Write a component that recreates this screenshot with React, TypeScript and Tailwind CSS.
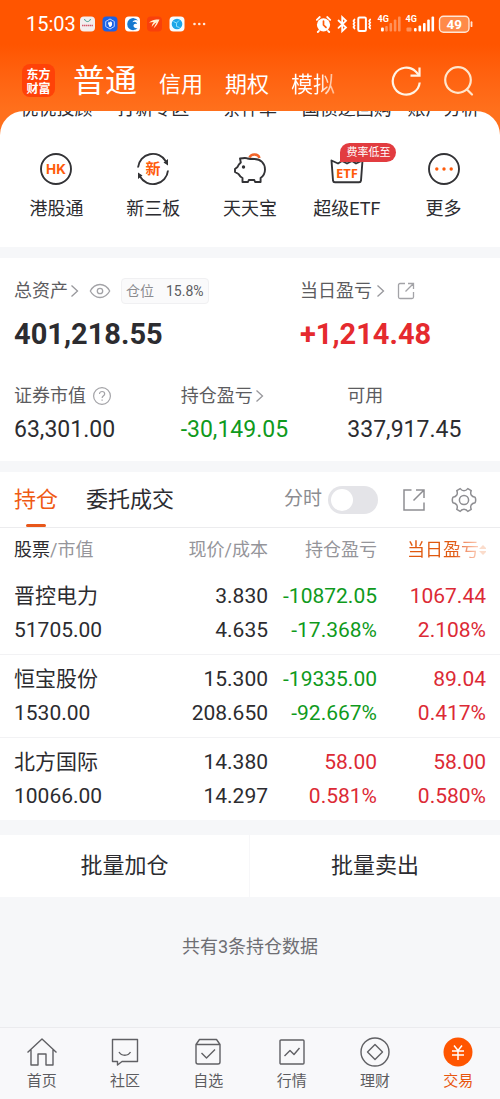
import React from 'react';

const RED = 'text-[#dc2a35]';
const GREEN = 'text-[#0f9a1c]';

const scrolledShortcuts = ['优优投顾', '打新专区', '条件单', '国债逆回购', '账户分析'];

type Cell = { top: string; bottom: string; tone: string };
type Holding = { name: string; value: string; price: string; cost: string; total: Cell; today: Cell };

const holdings: Holding[] = [
  {
    name: '晋控电力', value: '51705.00', price: '3.830', cost: '4.635',
    total: { top: '-10872.05', bottom: '-17.368%', tone: GREEN },
    today: { top: '1067.44', bottom: '2.108%', tone: RED },
  },
  {
    name: '恒宝股份', value: '1530.00', price: '15.300', cost: '208.650',
    total: { top: '-19335.00', bottom: '-92.667%', tone: GREEN },
    today: { top: '89.04', bottom: '0.417%', tone: RED },
  },
  {
    name: '北方国际', value: '10066.00', price: '14.380', cost: '14.297',
    total: { top: '58.00', bottom: '0.581%', tone: RED },
    today: { top: '58.00', bottom: '0.580%', tone: RED },
  },
];

function StatusApps() {
  return (
    <svg width="126" height="16" viewBox="0 0 126 16" aria-hidden="true">
      <rect x="0" y="0.5" width="15" height="15" rx="4" fill="#f3eeee" />
      <path d="M4.5 3c.8 3.4 5.2 3.4 6 0" fill="none" stroke="#3d9a8c" strokeWidth="1" />
      <path d="M2 9.5h11" stroke="#d25a6c" strokeWidth="1.6" strokeDasharray="1.4 .5" />
      <rect x="22.5" y="0.5" width="15" height="15" rx="4" fill="#1b62e6" />
      <path d="M30 3l4.3 2.5v5L30 13l-4.3-2.5v-5z" fill="none" stroke="#cfe0ff" strokeWidth=".9" />
      <path d="M28 7.5l.8-2 .9 1 .6-1.6.8 1.5.9-.8v3.6L30.5 11h-1z" fill="#fff" />
      <rect x="45" y="0.5" width="15" height="15" rx="4" fill="#fff" />
      <path d="M58 4.5A6 6 0 1 0 57.8 12c-2 .8-4.300-.4-4.300-2.300 0-1.700 1.700-2.500 3.500-1.700 0-2-2.500-3-4.600-1.800 1.200-2.200 3.600-2.700 5.600-1.700z" fill="#1679cf" />
      <rect x="67" y="0.5" width="15" height="15" rx="4" fill="#f9400b" />
      <path d="M69 6.500c3-2.500 6-3 10.500-3-1.500 3.500-3 6.500-6 9 1-2.500 2-4.500 3-6-2 1-3.500 2.500-4.700 4.500 0-2 .7-3.500 2-5-1.800 0-3.200.2-4.800.5z" fill="#fff0d2" />
      <rect x="89.500" y="0.5" width="15" height="15" rx="4" fill="#f5fbff" />
      <circle cx="97" cy="8" r="5.300" fill="#1ba6e8" />
      <path d="M93.500 5.500l3 1.500 2.500-2.500M96.500 7v3.500l3 1" fill="none" stroke="#8be0ff" strokeWidth="1" />
      <g fill="#ffe9dc">
        <circle cx="114.500" cy="8" r="1.300" /><circle cx="119.300" cy="8" r="1.300" /><circle cx="124.100" cy="8" r="1.300" />
      </g>
    </svg>
  );
}

function StatusSystem() {
  return (
    <svg width="158" height="20" viewBox="0 0 158 20" aria-hidden="true">
      <g stroke="#fff" fill="none" strokeLinecap="round">
        <circle cx="7.500" cy="10.800" r="6.600" fill="#fff" stroke="none" />
        <path d="M.8 5.800l3-2.800M14.200 5.800l-3-2.800M3 16.800l-1.200 1.200M12 16.800l1.200 1.200" strokeWidth="1.800" />
        <path d="M7.500 7v4l2.500 2.400" stroke="#ff5a08" strokeWidth="1.700" />
        <path d="M22.500 6.500l7.500 7-3.800 3.700V3.200l3.800 3.600-7.500 7" strokeWidth="1.800" />
        <rect x="42.300" y="3.500" width="7.600" height="13.500" rx="1.200" strokeWidth="2" />
        <path d="M38.500 5.500l-1 1.500 1 1.500-1 1.500 1 1.500-1 1.500 1 1.500M54.200 5.500l-1 1.500 1 1.500-1 1.500 1 1.500-1 1.500 1 1.500" strokeWidth="1.700" />
      </g>
      <g fill="#fff" fontFamily="Roboto, sans-serif" fontWeight="700" fontSize="9">
        <text x="61.500" y="8.300">4G</text>
        <text x="89.500" y="8.300">4G</text>
      </g>
      <g fill="#fff">
        <rect x="65" y="13.500" width="2.800" height="4" rx="1" />
        <g opacity=".35">
          <rect x="69.200" y="12" width="2.600" height="5.500" rx="1" />
          <rect x="73.500" y="9" width="2.600" height="8.500" rx="1" />
          <rect x="77.800" y="5.500" width="2.600" height="12" rx="1" />
          <rect x="82" y="2.500" width="2.600" height="15" rx="1" />
          <rect x="90.500" y="13.500" width="5" height="4" rx="1" />
        </g>
        <rect x="98" y="14" width="2.600" height="3.500" rx="1" />
        <rect x="102.500" y="11.500" width="2.600" height="6" rx="1" />
        <rect x="107" y="9" width="2.600" height="8.500" rx="1" />
        <rect x="111.200" y="5.500" width="2.600" height="12" rx="1" />
        <rect x="115.500" y="2.500" width="2.600" height="15" rx="1" />
      </g>
      <rect x="123.500" y="2.200" width="29.500" height="16" rx="4" fill="#ff8a48" stroke="#ffe6d6" strokeWidth="1.400" />
      <path d="M155.500 8.200v4" stroke="#ffe6d6" strokeWidth="1.800" strokeLinecap="round" />
      <text x="138.200" y="15" textAnchor="middle" fill="#fff" fontFamily="Roboto, sans-serif" fontWeight="700" fontSize="13.500">49</text>
    </svg>
  );
}

function RefreshIcon() {
  return (
    <svg width="32" height="32" viewBox="0 0 32 32" fill="none" stroke="#fff4e6" strokeWidth="2.200" aria-hidden="true">
      <path d="M28.700 17.500a13.500 13.500 0 1 1-4-11L28 10" />
      <path d="M28.500 2.500v8.200h-9" />
    </svg>
  );
}

function SearchGlyph() {
  return (
    <svg width="32" height="32" viewBox="0 0 32 32" fill="none" stroke="#ffe6cc" strokeWidth="2.200" aria-hidden="true">
      <circle cx="15" cy="15" r="12.800" />
      <path d="M24 24.500l5 5" strokeLinecap="round" />
    </svg>
  );
}

const ink = '#333336';
const orange = '#ff5b0a';

function HkIcon() {
  return (
    <svg width="34" height="34" viewBox="0 0 34 34" fill="none" aria-hidden="true">
      <circle cx="17" cy="17" r="15" stroke={ink} strokeWidth="1.900" />
      <text x="17" y="22" textAnchor="middle" fontFamily="Inter, sans-serif" fontWeight="700" fontSize="13.500" fill={orange}>HK</text>
    </svg>
  );
}

function NewBoardIcon() {
  return (
    <svg width="34" height="34" viewBox="0 0 34 34" fill="none" aria-hidden="true">
      <path d="M2 15.500A15 15 0 0 1 30 9.500M32 18.500A15 15 0 0 1 4 24.500" stroke={ink} strokeWidth="1.900" />
      <path d="M32 7v6.500l-4.500-3zM2 27v-6.500l4.500 3z" fill={ink} />
      <text x="17" y="22.300" textAnchor="middle" fontFamily="'Noto Sans CJK SC', sans-serif" fontWeight="700" fontSize="15" fill={orange}>新</text>
    </svg>
  );
}

function PiggyIcon() {
  return (
    <svg width="36" height="34" viewBox="0 0 36 34" fill="none" strokeLinejoin="round" aria-hidden="true">
      <path d="M15.500 6.500C14 5.500 11 6 8 6.500l.8 4C7 12 6 13.500 5.500 15L3 17v3l3.500 2c1 1.800 2.200 3 4 4v4h5.500l.8-2h5.500l.8 2h5.500v-4c2.800-2 4.400-4.800 4.400-8.500 0-6.500-4.500-10.500-10.500-10.500-2.800 0-5 0-7-.5z" stroke={ink} strokeWidth="1.900" />
      <circle cx="11.500" cy="15" r="1.700" fill={ink} />
      <path d="M17.500 5.500a5.200 4.500 0 0 1 10 .5" stroke="#f2652a" strokeWidth="2.400" />
    </svg>
  );
}

function EtfIcon() {
  return (
    <svg width="36" height="34" viewBox="0 0 36 34" fill="none" aria-hidden="true">
      <path d="M2.500 8.500l6.500 3 4-2.500 5 2.500 5-2.500 4 2.500 6.500-3L32 28.500a2 2 0 0 1-2 1.700H6a2 2 0 0 1-2-1.700z" stroke={ink} strokeWidth="1.900" strokeLinejoin="round" />
      <text x="18" y="26.300" textAnchor="middle" fontFamily="'Open Sans', sans-serif" fontWeight="700" fontSize="13" fill={orange}>ETF</text>
    </svg>
  );
}

function MoreIcon() {
  return (
    <svg width="34" height="34" viewBox="0 0 34 34" aria-hidden="true">
      <circle cx="17" cy="17" r="15" fill="none" stroke={ink} strokeWidth="1.900" />
      <g fill={orange}>
        <circle cx="9.800" cy="17" r="1.700" /><circle cx="17" cy="17" r="1.700" /><circle cx="24.200" cy="17" r="1.700" />
      </g>
    </svg>
  );
}

const shortcuts = [
  { label: '港股通', icon: <HkIcon /> },
  { label: '新三板', icon: <NewBoardIcon /> },
  { label: '天天宝', icon: <PiggyIcon /> },
  { label: '超级ETF', icon: <EtfIcon />, badge: '费率低至' },
  { label: '更多', icon: <MoreIcon /> },
];

function Chevron() {
  return (
    <svg width="9" height="14" viewBox="0 0 9 14" fill="none" stroke="#98989c" strokeWidth="1.300" aria-hidden="true">
      <path d="M1.500 1.500L7.500 7l-6 5.500" />
    </svg>
  );
}

function EyeIcon() {
  return (
    <svg width="22" height="16" viewBox="0 0 22 16" fill="none" stroke="#a3a3a7" strokeWidth="1.300" aria-hidden="true">
      <path d="M1.300 8C3.500 4 7 1.500 11 1.500S18.500 4 20.700 8c-2.200 4-5.700 6.500-9.700 6.500S3.500 12 1.300 8z" />
      <circle cx="11" cy="8" r="2.700" />
    </svg>
  );
}

function HelpIcon() {
  return (
    <svg width="20" height="20" viewBox="0 0 20 20" fill="none" stroke="#a3a3a7" strokeWidth="1.200" aria-hidden="true">
      <circle cx="10" cy="10" r="8.400" />
      <path d="M7.500 8c0-3.400 5.200-3.300 5.200 0 0 1.800-2.600 1.900-2.600 4" />
      <path d="M10.100 13.400v1.300" />
    </svg>
  );
}

function ShareSmall() {
  return (
    <svg width="18" height="18" viewBox="0 0 18 18" fill="none" stroke="#a3a3a7" strokeWidth="1.300" aria-hidden="true">
      <path d="M8 1.500H3A1.500 1.500 0 0 0 1.500 3v12A1.500 1.500 0 0 0 3 16.500h12a1.500 1.500 0 0 0 1.500-1.500v-5M11 1.500h5.500V7M16.500 1.500L8.500 9.500" />
    </svg>
  );
}

function ShareLarge() {
  return (
    <svg width="24" height="24" viewBox="0 0 24 24" fill="none" stroke="#8e8e92" strokeWidth="1.500" aria-hidden="true">
      <path d="M9.500 2H2v20h20v-7.500M14 2h8v8M22 2L11.500 12.500" />
    </svg>
  );
}

function GearIcon() {
  return (
    <svg width="28" height="28" viewBox="0 0 28 28" fill="none" stroke="#8e8e92" strokeWidth="1.500" strokeLinejoin="round" aria-hidden="true">
      <path d="M10.200 2.600C11.500 4.300 12.700 4.800 14 4.800s2.500-.5 3.800-2.200l3.400 2c-.8 2-.6 3.300 0 4.400.7 1.100 1.700 1.900 3.900 2.200q1.200 2.800 0 5.600c-2.200.3-3.200 1.100-3.900 2.200-.6 1.100-.8 2.400 0 4.400l-3.400 2c-1.300-1.700-2.500-2.200-3.800-2.200s-2.500.5-3.800 2.200l-3.400-2c.8-2 .6-3.300 0-4.400-.7-1.100-1.700-1.900-3.900-2.200q-1.200-2.800 0-5.600c2.200-.3 3.200-1.100 3.900-2.200.6-1.100.8-2.400 0-4.400z" />
      <circle cx="14" cy="14" r="4.600" />
    </svg>
  );
}

const navStroke = { fill: 'none', stroke: '#606064', strokeWidth: 1.4, strokeLinejoin: 'round' as const };

const navItems = [
  {
    label: '首页',
    icon: (
      <svg width="32" height="32" viewBox="0 0 32 32" {...navStroke} aria-hidden="true">
        <path d="M1.500 16.500L16 3l14.500 13.500M5 13.500v15.500h7V18h8v11h7V13.500" />
      </svg>
    ),
  },
  {
    label: '社区',
    icon: (
      <svg width="32" height="32" viewBox="0 0 32 32" {...navStroke} aria-hidden="true">
        <path d="M3.500 3.500h25v22H13l-4.500 3.500v-3.500h-5z" />
        <path d="M10 16c2.500 4.300 9 4.300 11.500 0" />
      </svg>
    ),
  },
  {
    label: '自选',
    icon: (
      <svg width="32" height="32" viewBox="0 0 32 32" {...navStroke} aria-hidden="true">
        <path d="M4 8.500L7.500 3.500h17L28 8.500v17.500a2 2 0 0 1-2 2H6a2 2 0 0 1-2-2zM4 8.500h24" />
        <path d="M9.500 17l5 5L23 13.500" />
      </svg>
    ),
  },
  {
    label: '行情',
    icon: (
      <svg width="32" height="32" viewBox="0 0 32 32" {...navStroke} aria-hidden="true">
        <rect x="4" y="4" width="24" height="24" rx="1" />
        <path d="M8.500 20l5.500-5.500 4 4 5.500-6.500" />
      </svg>
    ),
  },
  {
    label: '理财',
    icon: (
      <svg width="32" height="32" viewBox="0 0 32 32" {...navStroke} aria-hidden="true">
        <circle cx="16" cy="16" r="14" />
        <path d="M16 8.500l7.500 7.500-7.500 7.500L8.500 16z" />
      </svg>
    ),
  },
  {
    label: '交易',
    active: true,
    icon: (
      <svg width="32" height="32" viewBox="0 0 32 32" fill="none" aria-hidden="true">
        <circle cx="16" cy="16" r="14.500" fill="#ff5500" />
        <path d="M12 9.500l4 5 4-5M10 15h12M10 19h12M16 15v9" stroke="#fff" strokeWidth="1.500" />
      </svg>
    ),
  },
];

function NumCell({ top, bottom, tone }: Cell) {
  return (
    <div className={tone}>
      <div>{top}</div>
      <div>{bottom}</div>
    </div>
  );
}

export default function App() {
  return (
    <div className="flex min-h-screen flex-col bg-[#f6f7f9] font-[Roboto,'Noto_Sans_CJK_SC',sans-serif] text-[#2c2c30]">
      <header className="bg-linear-to-b from-[#ff5500] from-40% to-[#ff701c] text-white">
        <div className="flex h-12 items-center justify-between pr-[26px] pl-[26px]">
          <div className="flex items-center gap-1">
            <time className="text-xl">15:03</time>
            <StatusApps />
          </div>
          <StatusSystem />
        </div>
        <div className="flex h-[63px] items-center pt-0.5 pr-[25px] pl-[22px]">
          <div className="mr-[18px] flex h-[33px] w-[33px] shrink-0 flex-col items-center justify-center rounded-lg bg-[#ff4208] font-['Noto_Sans_CJK_SC',sans-serif] text-xs leading-[14px] font-bold">
            <span>东方</span>
            <span>财富</span>
          </div>
          <nav className="flex items-baseline gap-[22px] text-[22px] whitespace-nowrap">
            <a href="#normal" className="text-[32px] leading-10">普通</a>
            <a href="#credit">信用</a>
            <a href="#options">期权</a>
            <a href="#demo" className="bg-linear-to-r from-white from-60% to-[#ffb98f] bg-clip-text text-transparent">模拟</a>
          </nav>
          <div className="ml-auto flex gap-5">
            <button aria-label="刷新"><RefreshIcon /></button>
            <button aria-label="搜索"><SearchGlyph /></button>
          </div>
        </div>
      </header>

      <div className="bg-[#ff701c]">
        <section className="overflow-hidden rounded-t-3xl bg-white px-2 pb-6 text-lg leading-7">
          <div className="grid h-2 grid-cols-5 content-end overflow-hidden text-center leading-5 whitespace-nowrap">
            {scrolledShortcuts.map((s) => <span key={s} className="flex justify-center">{s}</span>)}
          </div>
          <div className="grid grid-cols-5 pt-8">
            {shortcuts.map((s) => (
              <button key={s.label} className="relative flex flex-col items-center gap-2">
                <span className="flex h-9 items-center">{s.icon}</span>
                <span>{s.label}</span>
                {s.badge && (
                  <span className="absolute -top-2 left-[42px] rounded-[10px] rounded-bl-none bg-[#e23c40] px-1.5 text-[11px] leading-[19px] whitespace-nowrap text-white">{s.badge}</span>
                )}
              </button>
            ))}
          </div>
        </section>
      </div>

      <section className="mt-[11px] bg-white pt-5 pb-[15px] text-lg leading-6 text-[#5c5c60]">
        <div className="grid grid-cols-[3fr_2fr]">
          <div className="pl-3.5">
            <div className="flex h-[25px] items-center">
              <a href="#assets" className="flex items-center gap-0.5">总资产<Chevron /></a>
              <button aria-label="隐藏金额" className="ml-2.5"><EyeIcon /></button>
              <span className="ml-2.5 flex items-center gap-3 rounded border border-[#f0f0f2] bg-[#fafafb] px-1 text-sm leading-6">
                <span className="text-[#8c8c90]">仓位</span><span>15.8%</span>
              </span>
            </div>
            <div className="mt-[13px] text-[29px] leading-9 font-bold text-[#2c2c30]">401,218.55</div>
          </div>
          <div>
            <div className="flex h-[25px] items-center">
              <a href="#today" className="flex items-center gap-1">当日盈亏<Chevron /></a>
              <button aria-label="分享" className="ml-3"><ShareSmall /></button>
            </div>
            <div className="mt-[13px] text-[29px] leading-9 font-bold text-[#e52a2e]">+1,214.48</div>
          </div>
        </div>
        <div className="mt-8 grid grid-cols-3">
          <div className="pl-3.5">
            <div className="flex h-6 items-center gap-1.5">证券市值<button aria-label="说明"><HelpIcon /></button></div>
            <div className="mt-1.5 text-[23px] leading-8 text-[#2c2c30]">63,301.00</div>
          </div>
          <div className="pl-3.5">
            <a href="#profit" className="flex h-6 items-center gap-0.5">持仓盈亏<Chevron /></a>
            <div className="mt-1.5 text-[23px] leading-8 text-[#0f9a1c]">-30,149.05</div>
          </div>
          <div className="pl-3.5">
            <div className="h-6">可用</div>
            <div className="mt-1.5 text-[23px] leading-8 text-[#2c2c30]">337,917.45</div>
          </div>
        </div>
      </section>

      <section className="mt-[11px] bg-white">
        <div className="flex h-14 items-stretch border-b border-[#ececee] pr-[22px] pl-3.5">
          <div className="flex gap-7 text-[22px]">
            <button className="relative text-[#ef5a14]">
              持仓
              <span className="absolute bottom-0 left-1/2 h-[3px] w-5 -translate-x-1/2 rounded-full bg-[#e8571a]" />
            </button>
            <button>委托成交</button>
          </div>
          <label className="ml-auto flex items-center gap-1.5 text-[19px] text-[#8c8c90]">
            分时
            <span className="relative flex">
              <input type="checkbox" className="peer h-7 w-[50px] appearance-none rounded-full bg-[#e4e4e8]" />
              <span className="pointer-events-none absolute top-[3px] left-[3px] h-[22px] w-[22px] rounded-full bg-white peer-checked:left-[25px]" />
            </span>
          </label>
          <button aria-label="分享持仓" className="ml-6"><ShareLarge /></button>
          <button aria-label="设置" className="ml-6"><GearIcon /></button>
        </div>

        <table className="w-full table-fixed text-right text-[21px] leading-[34px]">
          <colgroup>
            <col />
            <col className="w-[109px]" />
            <col className="w-[109px]" />
            <col className="w-[123px]" />
          </colgroup>
          <thead className="text-lg leading-[44px] whitespace-nowrap text-[#95959a]">
            <tr>
              <th className="pl-3.5 text-left font-normal"><span className="text-[#2c2c30]">股票</span>/市值</th>
              <th className="font-normal">现价/成本</th>
              <th className="font-normal">持仓盈亏</th>
              <th className="pr-3.5 pl-[30px] text-left font-normal">
                <span className="flex items-center overflow-hidden bg-linear-to-r from-[#e0590f] from-60% to-[#fff0e6] bg-clip-text text-transparent">
                  当日盈亏
                  <svg width="8" height="12" viewBox="0 0 8 12" fill="#fbdccb" className="shrink-0" aria-hidden="true">
                    <path d="M0 5l4-4 4 4zM0 7l4 4 4-4z" />
                  </svg>
                </span>
              </th>
            </tr>
          </thead>
          <tbody>
            {holdings.map((h) => (
              <tr key={h.name} className="border-b border-[#f2f2f4] last:border-b-0">
                <td className="py-[7px] pl-3.5 text-left"><div>{h.name}</div><div>{h.value}</div></td>
                <td className="py-[7px]"><div>{h.price}</div><div>{h.cost}</div></td>
                <td className="py-[7px]"><NumCell {...h.total} /></td>
                <td className="py-[7px] pr-3.5"><NumCell {...h.today} /></td>
              </tr>
            ))}
          </tbody>
        </table>
      </section>

      <div className="mt-[15px] grid grid-cols-2 divide-x divide-[#f7f7f9] bg-white text-[22px] leading-[62px]">
        <button>批量加仓</button>
        <button>批量卖出</button>
      </div>

      <p className="py-9 text-center text-lg leading-7 text-[#6e6e73]">共有3条持仓数据</p>

      <nav className="mt-auto grid h-[72px] grid-cols-6 border-t border-[#ebebee] bg-[#f8f8fa] pt-2 text-[15px] leading-5 text-[#5c5c60]">
        {navItems.map((n) => (
          <a key={n.label} href="#nav" className="flex flex-col items-center gap-[3px]">
            {n.icon}
            <span className={n.active ? 'text-[#e8560f]' : ''}>{n.label}</span>
          </a>
        ))}
      </nav>
    </div>
  );
}
